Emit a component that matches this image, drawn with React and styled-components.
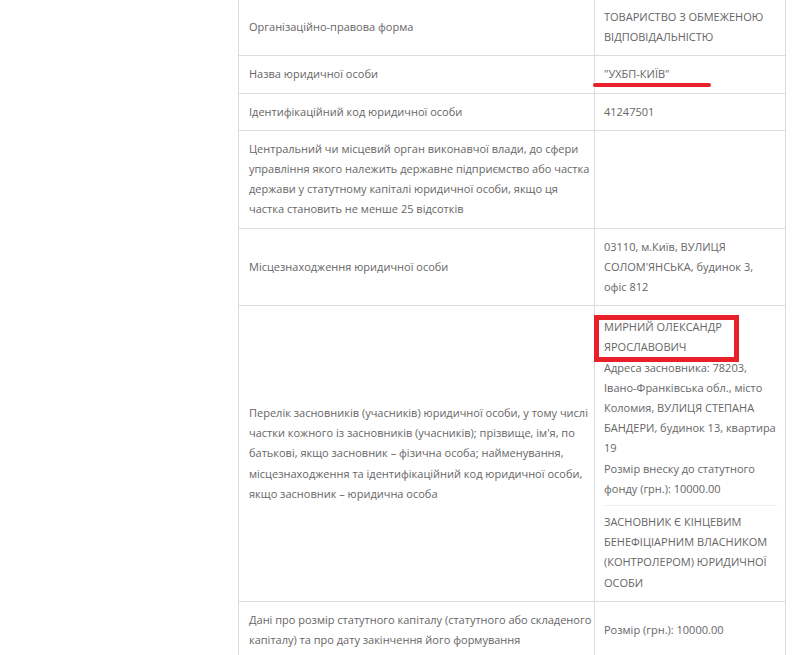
import React from "react";
import styled, { createGlobalStyle } from "styled-components";

const rows = [
  {
    id: 1,
    label: "Організаційно-правова форма",
    value: "ТОВАРИСТВО З ОБМЕЖЕНОЮ ВІДПОВІДАЛЬНІСТЮ",
  },
  { id: 2, label: "Назва юридичної особи", value: "name" },
  { id: 3, label: "Ідентифікаційний код юридичної особи", value: "41247501" },
  {
    id: 4,
    label:
      "Центральний чи місцевий орган виконавчої влади, до сфери управління якого належить державне підприємство або частка держави у статутному капіталі юридичної особи, якщо ця частка становить не менше 25 відсотків",
    value: "",
  },
  {
    id: 5,
    label: "Місцезнаходження юридичної особи",
    value: "03110, м.Київ, ВУЛИЦЯ СОЛОМ'ЯНСЬКА, будинок 3, офіс 812",
  },
  {
    id: 6,
    label:
      "Перелік засновників (учасників) юридичної особи, у тому числі частки кожного із засновників (учасників); прізвище, ім'я, по батькові, якщо засновник – фізична особа; найменування, місцезнаходження та ідентифікаційний код юридичної особи, якщо засновник – юридична особа",
    value: "founders",
  },
  {
    id: 7,
    label:
      "Дані про розмір статутного капіталу (статутного або складеного капіталу) та про дату закінчення його формування",
    value: "Розмір (грн.): 10000.00",
  },
];

function renderValue(value) {
  if (value === "name") {
    return (
      <Underlined>
        "УХБП-КИЇВ"
        <RedLine />
      </Underlined>
    );
  }
  if (value === "founders") {
    return (
      <>
        <Boxed>
          МИРНИЙ ОЛЕКСАНДР ЯРОСЛАВОВИЧ
          <RedBox />
        </Boxed>
        <div>
          Адреса засновника: 78203, Івано-Франківська обл., місто Коломия,
          ВУЛИЦЯ СТЕПАНА БАНДЕРИ, будинок 13, квартира 19
        </div>
        <div>Розмір внеску до статутного фонду (грн.): 10000.00</div>
        <Divider />
        <div>
          ЗАСНОВНИК Є КІНЦЕВИМ БЕНЕФІЦІАРНИМ ВЛАСНИКОМ (КОНТРОЛЕРОМ)
          ЮРИДИЧНОЇ ОСОБИ
        </div>
      </>
    );
  }
  return value;
}

function App() {
  return (
    <>
      <GlobalStyle />
      <Page>
        <Table>
          <colgroup>
            <col style={{ width: "356px" }} />
            <col style={{ width: "191px" }} />
          </colgroup>
          <tbody>
            {rows.map((row) => (
              <Row key={row.id}>
                <Label>{row.label}</Label>
                <Value $top={row.value === "founders" ? 11 : 8}>
                  {renderValue(row.value)}
                </Value>
              </Row>
            ))}
          </tbody>
        </Table>
      </Page>
    </>
  );
}

const GlobalStyle = createGlobalStyle`
  html, body {
    margin: 0;
    padding: 0;
    background: #fff;
  }
  body {
    font-family: "Open Sans", "Noto Sans", sans-serif;
  }
`;

const Page = styled.div`
  width: 812px;
  height: 655px;
  overflow: hidden;
  padding-left: 238px;
  box-sizing: border-box;
`;

const Table = styled.table`
  width: 547px;
  table-layout: fixed;
  border-collapse: collapse;
  margin-top: -2px;
  font-size: 11px;
  line-height: 20.2px;
  color: #666;
`;

const Row = styled.tr``;

const Cell = styled.td`
  border: 1px solid #dddddd;
  vertical-align: middle;
  word-wrap: break-word;
`;

const Label = styled(Cell)`
  padding: 8px 2px 8px 10px;
`;

const Value = styled(Cell)`
  padding: ${(p) => p.$top}px 8px 8px 9px;
`;

const Underlined = styled.span`
  position: relative;
  display: inline-block;
`;

const RedLine = styled.span`
  position: absolute;
  left: -11px;
  top: 19px;
  width: 118px;
  height: 4px;
  border-radius: 2px;
  background: #e8202a;
`;

const Boxed = styled.div`
  position: relative;
  padding-right: 20px;
`;

const RedBox = styled.span`
  position: absolute;
  left: -10px;
  top: -2px;
  width: 145px;
  height: 47px;
  box-sizing: border-box;
  border: 5px solid #e8202a;
`;

const Divider = styled.div`
  height: 1px;
  background: #eeeeee;
  margin: 6px 0 6px 0;
`;

export default App;
